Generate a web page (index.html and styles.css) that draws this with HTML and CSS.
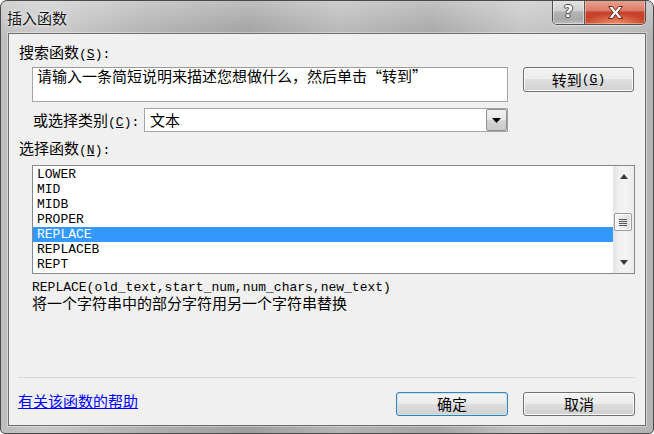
FILE: index.html
```html
<!DOCTYPE html>
<html lang="zh-CN">
<head>
<meta charset="utf-8">
<title>插入函数</title>
<link rel="stylesheet" href="styles.css">
</head>
<body>
<div class="window">
  <div class="titlebar">
    <span class="title">插入函数</span>
    <div class="caption">
      <div class="cap help"><span class="qmark">?</span></div>
      <div class="cap close">
        <svg width="17" height="15" viewBox="0 0 17 15"><polygon points="1.5,1.5 5.5,1.5 8.5,5.5 11.5,1.5 15.5,1.5 10.8,7.5 15.5,13.5 11.5,13.5 8.5,9.5 5.5,13.5 1.5,13.5 6.2,7.5" fill="#ffffff" stroke="#6b2a20" stroke-width="1"/></svg>
      </div>
    </div>
  </div>
  <div class="client">
    <div class="lbl lbl-search">搜索函数<span class="m">(<u>S</u>):</span></div>
    <div class="search-row">
      <div class="textbox">请输入一条简短说明来描述您想做什么，然后单击“转到”</div>
      <div class="btn go">转到<span class="m">(<u>G</u>)</span></div>
    </div>
    <div class="cat-row">
      <span class="lbl cat-lbl">或选择类别<span class="m">(<u>C</u>):</span></span>
      <div class="combo">
        <span class="combo-text">文本</span>
        <div class="dd"><svg width="9" height="5" viewBox="0 0 9 5"><polygon points="0,0 9,0 4.5,5" fill="#000"/></svg></div>
      </div>
    </div>
    <div class="lbl lbl-list">选择函数<span class="m">(<u>N</u>):</span></div>
    <div class="listbox">
      <div class="items">
        <div class="item">LOWER</div>
        <div class="item">MID</div>
        <div class="item">MIDB</div>
        <div class="item">PROPER</div>
        <div class="item sel">REPLACE</div>
        <div class="item">REPLACEB</div>
        <div class="item">REPT</div>
      </div>
      <div class="vscroll">
        <div class="arrow"><svg width="8" height="5" viewBox="0 0 8 5"><polygon points="0,5 4,0 8,5" fill="#3c3c3c"/></svg></div>
        <div class="track"><div class="thumb"><i></i><i></i><i></i><i></i></div></div>
        <div class="arrow"><svg width="8" height="5" viewBox="0 0 8 5"><polygon points="0,0 8,0 4,5" fill="#3c3c3c"/></svg></div>
      </div>
    </div>
    <div class="desc">
      <div class="syntax">REPLACE(old_text,start_num,num_chars,new_text)</div>
      <div class="explain">将一个字符串中的部分字符用另一个字符串替换</div>
    </div>
    <div class="spacer"></div>
    <div class="sep"></div>
    <div class="footer">
      <a class="help-link" href="#">有关该函数的帮助</a>
      <div class="btn ok">确定</div>
      <div class="btn cancel">取消</div>
    </div>
  </div>
</div>
</body>
</html>
```
FILE: styles.css
```css
* { box-sizing: border-box; }
html, body { margin: 0; padding: 0; }
body {
  width: 654px;
  height: 434px;
  overflow: hidden;
  background: #ffffff;
  font-family: "Noto Sans CJK SC", "Noto Sans", sans-serif;
  font-size: 15px;
  color: #000;
}
.window {
  width: 654px;
  height: 434px;
  border: 1px solid #4a4a4a;
  border-radius: 7px 7px 5px 5px;
  overflow: hidden;
  display: flex;
  flex-direction: column;
  background:
    linear-gradient(180deg, rgba(255,255,255,0.32) 0px, rgba(255,255,255,0.05) 32px, rgba(255,255,255,0) 33px),
    linear-gradient(90deg, #bdbdbd 0%, #c8c8c8 7%, #b0b0b0 22%, #9e9e9e 38%, #b5b5b5 52%, #a4a4a4 66%, #c2c2c2 80%, #b3b3b3 100%);
}
.titlebar {
  height: 32px;
  flex: none;
  display: flex;
  justify-content: space-between;
  align-items: flex-start;
  padding-left: 6px;
}
.title {
  padding-top: 9px;
  line-height: 16px;
  color: #111;
  text-shadow: 0 0 5px rgba(255,255,255,0.9), 0 0 2px rgba(255,255,255,0.8);
}
.caption {
  display: flex;
  margin-right: 7px;
  height: 25px;
  margin-top: -1px;
  border: 1px solid #4f4f4f;
  border-top: none;
  border-radius: 0 0 5px 5px;
  overflow: hidden;
  box-shadow: 0 1px 0 rgba(255,255,255,0.5);
}
.cap {
  height: 100%;
  display: flex;
  align-items: center;
  justify-content: center;
}
.help {
  width: 32px;
  border-right: 1px solid #5a5a5a;
  background: linear-gradient(180deg, #e4e4e4 0%, #cfcfcf 45%, #b3b3b3 50%, #a9a9a9 80%, #bdbdbd 100%);
  box-shadow: inset 0 0 0 1px rgba(255,255,255,0.45);
}
.qmark {
  font-family: "DejaVu Sans", sans-serif;
  font-weight: bold;
  font-size: 16px;
  line-height: 16px;
  color: #fff;
  text-shadow: 1px 0 0 #4a4a4a, -1px 0 0 #4a4a4a, 0 1px 0 #4a4a4a, 0 -1px 0 #4a4a4a;
}
.close {
  width: 60px;
  background:
    radial-gradient(ellipse 60% 45% at 50% 100%, rgba(255,170,120,0.8), rgba(255,170,120,0) 100%),
    linear-gradient(180deg, #e9a593 0%, #db7a66 45%, #c8432d 50%, #c03a24 100%);
  box-shadow: inset 0 0 0 1px rgba(255,220,210,0.45);
}
.close svg { display: block; margin-top: 1px; }

.client {
  flex: none;
  height: 393px;
  margin: 0 7px;
  background: #f0f0f0;
  border: 1px solid #6e6e6e;
  box-shadow: 0 0 0 1px rgba(255,255,255,0.35);
  display: flex;
  flex-direction: column;
}
.m {
  font-family: "Liberation Mono", monospace;
  font-size: 13px;
  line-height: 1;
}
.lbl {
  display: block;
  height: 20px;
  line-height: 20px;
  white-space: nowrap;
  flex: none;
}
.lbl-search { margin: 8px 0 0 10px; }
.search-row {
  display: flex;
  align-items: flex-start;
  gap: 15px;
  margin: 5px 11px 0 23px;
  height: 35px;
  flex: none;
}
.textbox {
  width: 476px;
  height: 35px;
  background: #fff;
  border: 1px solid #a5a5a5;
  border-top-color: #9a9a9a;
  padding: 0 4px;
  line-height: 16px;
  white-space: nowrap;
}
.btn {
  display: flex;
  align-items: center;
  justify-content: center;
  border: 1px solid #707070;
  border-radius: 3px;
  background: linear-gradient(180deg, #f3f3f3 0%, #ececec 48%, #dedede 50%, #d0d0d0 100%);
  box-shadow: inset 0 0 0 1px #fbfbfb;
  line-height: 16px;
  white-space: nowrap;
}
.go { width: 111px; height: 25px; }
.cat-row {
  display: flex;
  align-items: center;
  margin: 6px 0 0 24px;
  height: 24px;
  flex: none;
}
.cat-lbl { width: 111px; }
.combo {
  width: 364px;
  height: 24px;
  background: #fff;
  border: 1px solid #a5a5a5;
  display: flex;
  align-items: stretch;
}
.combo-text {
  flex: 1;
  padding-left: 5px;
  line-height: 22px;
}
.dd {
  width: 21px;
  display: flex;
  align-items: center;
  justify-content: center;
  border: 1px solid #8f8f8f;
  border-radius: 2px;
  background: linear-gradient(180deg, #f2f2f2 0%, #e6e6e6 48%, #d6d6d6 52%, #c9c9c9 100%);
}
.lbl-list { margin: 6px 0 0 10px; }
.listbox {
  width: 603px;
  height: 109px;
  margin: 7px 0 0 23px;
  background: #fff;
  border: 1px solid #828790;
  display: flex;
  flex: none;
}
.items {
  flex: 1;
  padding-top: 1px;
  font-family: "Liberation Mono", monospace;
  font-size: 13px;
  line-height: 15px;
}
.item { height: 15px; padding-left: 4px; }
.item.sel { background: #3399ff; color: #fff; }
.vscroll {
  width: 21px;
  flex: none;
  display: flex;
  flex-direction: column;
  background: linear-gradient(90deg, #e3e3e3 0%, #f1f1f1 30%, #f4f4f4 60%, #ececec 100%);
}
.arrow {
  height: 21px;
  flex: none;
  display: flex;
  align-items: center;
  justify-content: center;
}
.track {
  flex: 1;
  padding-top: 26px;
}
.thumb {
  margin: 0 2px 0 1px;
  height: 18px;
  border: 1px solid #9a9a9a;
  border-radius: 2px;
  background: linear-gradient(90deg, #f5f5f5 0%, #ececec 50%, #dcdcdc 100%);
  box-shadow: inset 0 0 0 1px #fdfdfd;
  display: flex;
  flex-direction: column;
  align-items: center;
  justify-content: center;
  gap: 1px;
}
.thumb i {
  display: block;
  width: 8px;
  height: 1px;
  background: #555;
}
.desc {
  margin: 6px 0 0 23px;
  flex: none;
}
.syntax {
  font-family: "Liberation Mono", monospace;
  font-size: 13px;
  height: 15px;
  line-height: 15px;
}
.explain { height: 15px; line-height: 15px; }
.spacer { flex: 1; }
.sep {
  height: 1px;
  margin: 0 10px 0 9px;
  background: #d7d7d7;
  flex: none;
}
.footer {
  display: flex;
  align-items: center;
  gap: 15px;
  height: 24px;
  margin: 14px 10px 9px 9px;
  flex: none;
}
.help-link {
  margin-right: auto;
  align-self: flex-start;
  color: #0000ff;
  text-decoration: underline;
  line-height: 18px;
}
.ok, .cancel { width: 112px; height: 24px; }
.ok {
  border-color: #3c7fb1;
  box-shadow: inset 0 0 0 1px #c4e5f6;
}
```
